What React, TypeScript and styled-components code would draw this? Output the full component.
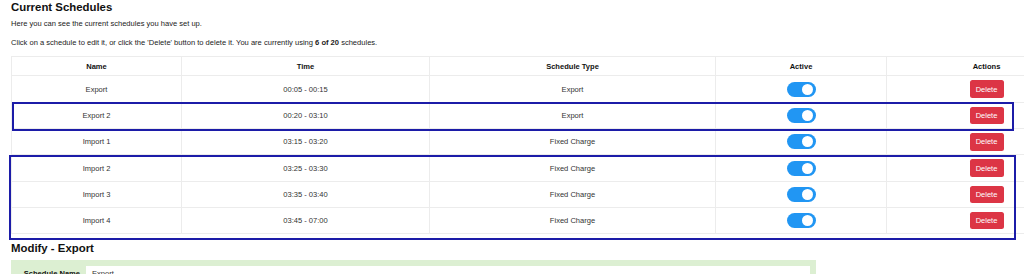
import React from "react";
import styled, { createGlobalStyle } from "styled-components";

const Global = createGlobalStyle`
  html, body { margin: 0; padding: 0; overflow: hidden; background: #fff; }
  body { font-family: "Liberation Sans", Arial, sans-serif; color: #222; }
`;

const Page = styled.div`
  position: relative;
  padding-left: 11px;
  width: 1100px;
`;

const Title = styled.h2`
  font-size: 11.4px;
  line-height: 13px;
  font-weight: 700;
  margin: 1px 0 0;
  color: #111;
`;

const Para = styled.p<{ $top: number }>`
  font-size: 7.56px;
  line-height: 11.34px;
  margin: ${(p) => p.$top}px 0 0;
  color: #222;
`;

const Table = styled.table`
  margin-top: 7.3px;
  border-collapse: collapse;
  table-layout: fixed;
  width: 1076px;
  font-size: 7.56px;
`;

const Th = styled.th<{ $w: number }>`
  width: ${(p) => p.$w}px;
  height: 18.5px;
  padding: 0;
  border: 1px solid #ececec;
  font-weight: 700;
  color: #111;
  text-align: center;
  vertical-align: middle;
`;

const Td = styled.td`
  height: 25.3px;
  padding: 0;
  border: 1px solid #ececec;
  text-align: center;
  vertical-align: middle;
  color: #333;
`;

const Toggle = styled.span`
  display: inline-block;
  position: relative;
  width: 29px;
  height: 15px;
  border-radius: 8px;
  background: #2196f3;
  vertical-align: middle;
  &::after {
    content: "";
    position: absolute;
    top: 2px;
    right: 2.5px;
    width: 11px;
    height: 11px;
    border-radius: 50%;
    background: #fff;
  }
`;

const DeleteBtn = styled.button`
  width: 34px;
  height: 17.6px;
  padding: 0;
  border: none;
  border-radius: 2.5px;
  background: #dc3545;
  color: #fff;
  font-family: "Liberation Sans", Arial, sans-serif;
  font-size: 7.5px;
  vertical-align: middle;
`;

const Highlight = styled.div<{ $l: number; $t: number; $w: number; $h: number }>`
  position: absolute;
  left: ${(p) => p.$l}px;
  top: ${(p) => p.$t}px;
  width: ${(p) => p.$w}px;
  height: ${(p) => p.$h}px;
  box-sizing: border-box;
  border: 2px solid #1c1ca8;
  pointer-events: none;
`;

const SubTitle = styled.h3`
  font-size: 11.4px;
  line-height: 13px;
  font-weight: 700;
  margin: 8px 0 0;
  color: #111;
`;

const Panel = styled.div`
  margin-top: 5px;
  width: 805px;
  box-sizing: border-box;
  background: #dcefd2;
  padding: 6px 6px 0;
  display: grid;
  grid-template-columns: 69px 1fr;
`;

const Label = styled.div`
  font-size: 7.56px;
  line-height: 9px;
  font-weight: 700;
  color: #111;
  text-align: right;
  padding: 3px 6px 0 0;
`;

const InputBox = styled.div`
  background: #fff;
  height: 20px;
  font-size: 7.56px;
  line-height: 9px;
  color: #333;
  padding: 3px 0 0 6px;
  box-sizing: border-box;
`;

const rows = [
  { name: "Export", time: "00:05 - 00:15", type: "Export" },
  { name: "Export 2", time: "00:20 - 03:10", type: "Export" },
  { name: "Import 1", time: "03:15 - 03:20", type: "Fixed Charge" },
  { name: "Import 2", time: "03:25 - 03:30", type: "Fixed Charge" },
  { name: "Import 3", time: "03:35 - 03:40", type: "Fixed Charge" },
  { name: "Import 4", time: "03:45 - 07:00", type: "Fixed Charge" },
];

export default function App() {
  return (
    <Page>
      <Global />
      <Title>Current Schedules</Title>
      <Para $top={4.4}>Here you can see the current schedules you have set up.</Para>
      <Para $top={7.6}>
        Click on a schedule to edit it, or click the 'Delete' button to delete it. You are currently using{" "}
        <b>6 of 20</b> schedules.
      </Para>
      <Table>
        <thead>
          <tr>
            <Th $w={169}>Name</Th>
            <Th $w={247}>Time</Th>
            <Th $w={285}>Schedule Type</Th>
            <Th $w={170}>Active</Th>
            <Th $w={199}>Actions</Th>
          </tr>
        </thead>
        <tbody>
          {rows.map((r) => (
            <tr key={r.name}>
              <Td>{r.name}</Td>
              <Td>{r.time}</Td>
              <Td>{r.type}</Td>
              <Td>
                <Toggle />
              </Td>
              <Td>
                <DeleteBtn>Delete</DeleteBtn>
              </Td>
            </tr>
          ))}
        </tbody>
      </Table>
      <SubTitle>Modify - Export</SubTitle>
      <Panel>
        <Label>Schedule Name</Label>
        <InputBox>Export</InputBox>
      </Panel>
      <Highlight $l={12} $t={101} $w={1002} $h={29} />
      <Highlight $l={9} $t={154} $w={1007} $h={85} />
    </Page>
  );
}
